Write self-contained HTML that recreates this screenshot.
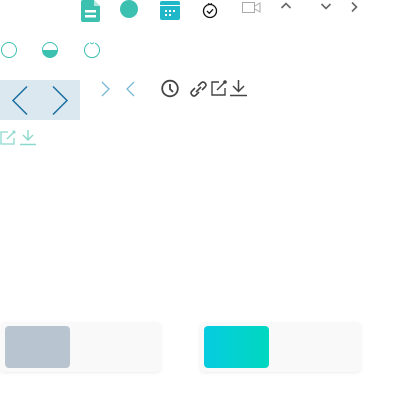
<!DOCTYPE html>
<html><head><meta charset="utf-8"><style>
body{margin:0;width:400px;height:400px;background:#fff;position:relative;overflow:hidden;font-family:"Liberation Sans",sans-serif}
svg{position:absolute;overflow:visible}
.card{position:absolute;top:322px;width:161px;height:50px;background:#f9f9f9;border-radius:5px;box-shadow:0 1px 3px rgba(0,0,0,0.08)}
.in{position:absolute;left:5px;top:4px;width:65px;height:42px;border-radius:4px}
</style></head><body>
<!-- row 1 -->
<svg style="left:81px;top:0" width="19" height="23"><path d="M2 0H13L19 6V20Q19 22 17 22H2Q0 22 0 20V2Q0 0 2 0Z" fill="#3cc1b0"/><path d="M13 0V6H19" fill="#fff" opacity=".6"/><rect x="4" y="10" width="11" height="2.5" fill="#fff"/><rect x="4" y="15" width="11" height="2.5" fill="#fff"/></svg>
<svg style="left:120px;top:0" width="18" height="18"><circle cx="9" cy="9" r="9" fill="#3cc1b0"/></svg>
<svg style="left:160px;top:1px" width="20" height="20"><rect x="0" y="0" width="20" height="19" rx="2" fill="#20b8c8"/><rect x="0" y="4" width="20" height="1" fill="#fff"/><g fill="#fff"><rect x="5" y="9" width="2" height="2"/><rect x="9" y="9" width="2" height="2"/><rect x="13" y="9" width="2" height="2"/><rect x="5" y="13" width="2" height="2"/><rect x="9" y="13" width="2" height="2"/></g></svg>
<svg style="left:202px;top:2px" width="16" height="16"><circle cx="8" cy="9" r="6.5" fill="none" stroke="#111" stroke-width="1.3"/><path d="M5 9L7.3 11.3L11 7.3" fill="none" stroke="#111" stroke-width="1.3"/><path d="M6 1.5L8 2.5L10 1.5" fill="none" stroke="#111" stroke-width="1"/></svg>
<svg style="left:242px;top:2px" width="19" height="12"><rect x="0.5" y="0.5" width="12" height="10" fill="none" stroke="#aaa"/><path d="M13 4L18 1V10L13 7" fill="none" stroke="#aaa"/></svg>
<svg style="left:281px;top:2px" width="10" height="7"><path d="M0.5 6L5 1.5L9.5 6" fill="none" stroke="#666" stroke-width="1.6"/></svg>
<svg style="left:321px;top:3px" width="10" height="7"><path d="M0.5 1L5 5.5L9.5 1" fill="none" stroke="#666" stroke-width="1.6"/></svg>
<svg style="left:351px;top:2px" width="7" height="10"><path d="M1 0.5L5.5 5L1 9.5" fill="none" stroke="#666" stroke-width="1.6"/></svg>
<!-- row 2 -->
<svg style="left:0;top:42px" width="18" height="18"><circle cx="9" cy="8" r="7.5" fill="none" stroke="#3cc1b0" stroke-width="1"/></svg>
<svg style="left:41px;top:42px" width="18" height="18"><circle cx="9" cy="8" r="7.5" fill="none" stroke="#3cc1b0" stroke-width="1"/><path d="M1.5 8A7.5 7.5 0 0 0 16.5 8Z" fill="#3cc1b0"/></svg>
<svg style="left:83px;top:42px" width="18" height="18"><path d="M6 1.2A7.5 7.5 0 1 0 12 1.2" fill="none" stroke="#3cc1b0" stroke-width="1"/><path d="M7 0.5L9 2L11 0.5" fill="none" stroke="#3cc1b0" stroke-width="0.8"/></svg>
<!-- row 3 -->
<div style="position:absolute;left:0;top:80px;width:80px;height:40px;background:#dce8f0"></div>
<svg style="left:12px;top:86px" width="16" height="30"><path d="M15 0.5L1 14.5L15 28.5" fill="none" stroke="#1a6fa0" stroke-width="1.5"/></svg>
<svg style="left:52px;top:86px" width="16" height="30"><path d="M1 0.5L15 14.5L1 28.5" fill="none" stroke="#1a6fa0" stroke-width="1.5"/></svg>
<svg style="left:101px;top:81px" width="9" height="16"><path d="M1 1L8 8L1 15" fill="none" stroke="#7ab8d8" stroke-width="1.3"/></svg>
<svg style="left:126px;top:81px" width="9" height="16"><path d="M8 1L1 8L8 15" fill="none" stroke="#7ab8d8" stroke-width="1.3"/></svg>
<svg style="left:161px;top:80px" width="18" height="18"><circle cx="9" cy="8.5" r="7.8" fill="none" stroke="#444" stroke-width="1.8"/><path d="M9 4V9L12 12" fill="none" stroke="#444" stroke-width="1.8"/></svg>
<svg style="left:190px;top:80px" width="17" height="18"><g fill="none" stroke="#444" stroke-width="1.6"><path d="M8 6L11 3Q13 1 15 3Q17 5 15 7L12 10"/><path d="M9 12L6 15Q4 17 2 15Q0 13 2 11L5 8"/><path d="M6 12L11 7"/></g></svg>
<svg style="left:210px;top:80px" width="17" height="17"><g fill="none" stroke="#444" stroke-width="1.4"><path d="M9 2H2V15H15V8"/><path d="M7 10L15 2"/></g><circle cx="15" cy="2" r="1.8" fill="#444"/></svg>
<svg style="left:230px;top:80px" width="17" height="17"><g fill="none" stroke="#444" stroke-width="1.5"><path d="M8.5 0V11M3 6L8.5 11.5L14 6M0 15.5H17"/></g></svg>
<!-- row 4 -->
<svg style="left:0;top:130px" width="16" height="16"><g fill="none" stroke="#8ad8cc" stroke-width="1.3"><path d="M8 2H1V14H14V8"/><path d="M7 9L14 2"/></g><circle cx="14" cy="2" r="1.5" fill="#8ad8cc"/></svg>
<svg style="left:20px;top:130px" width="16" height="16"><g fill="none" stroke="#8ad8cc" stroke-width="1.4"><path d="M8 0V10M3 5L8 10L13 5M0 14.5H16"/></g></svg>
<!-- cards -->
<div class="card" style="left:0"><div class="in" style="background:#b8c4d0"></div></div>
<div class="card" style="left:200px"><div class="in" style="left:4px;background:linear-gradient(90deg,#06cce0,#00d8c0)"></div></div>
</body></html>
